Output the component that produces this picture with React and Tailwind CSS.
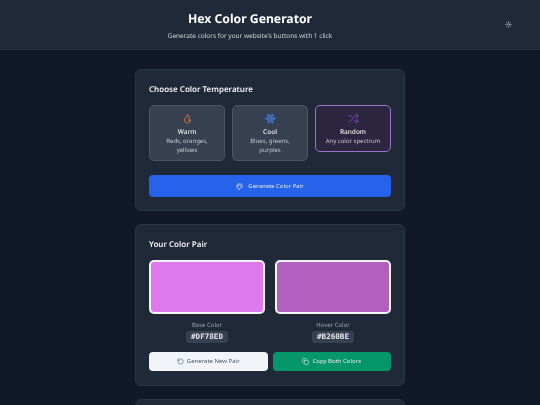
import { Snowflake, Shuffle, Palette, RotateCcw, Copy, Sun } from 'lucide-react'
import { RiFireLine } from 'react-icons/ri'

const FONT = "font-['Noto_Sans',sans-serif] [text-rendering:geometricPrecision]"

function TempOption({ icon, title, desc, active }) {
  const box = active
    ? 'bg-[#2d2640] border-[1.5px] border-[#9a74cf] h-[47px]'
    : 'bg-[#374151] border border-[#4b5563] h-[56px]'
  return (
    <div className={`w-[76px] rounded-[5px] flex flex-col items-center pt-[7px] ${box}`}>
      {icon}
      <div className="text-[6.5px] leading-[9px] font-medium text-[#f3f4f6] mt-[3px]">{title}</div>
      <div className="text-[6px] leading-[8.5px] text-[#c4cad3] text-center px-[6px] mt-[1px]">{desc}</div>
    </div>
  )
}

function Swatch({ color, label, hex }) {
  return (
    <div className="w-[116px] flex flex-col items-center">
      <div className="w-full h-[54px] rounded-[5px] border-2 border-[#f3f4f6]" style={{ backgroundColor: color }} />
      <div className="text-[6px] leading-[8px] text-[#9ca3af] mt-[7px]">{label}</div>
      <div className="mt-[2px] h-[12px] px-[5px] rounded-[3px] bg-[#374151] flex items-center font-['DejaVu_Sans_Mono',monospace] font-bold text-[7.6px] text-[#e5e7eb]">{hex}</div>
    </div>
  )
}

export default function App() {
  return (
    <div className="w-[540px] h-[405px] overflow-hidden bg-[#111827]">
      <div className={`${FONT} [will-change:transform] text-white`}>
        <header className="h-[50px] bg-[#1f2937] border-b border-[#263241] flex items-center">
          <div className="w-[500px] flex flex-col items-center">
            <h1 className="text-[12.2px] leading-[17px] font-bold text-white">Hex Color Generator</h1>
            <p className="text-[6.5px] leading-[9px] text-[#d1d5db] mt-[4px]">Generate colors for your website's buttons with 1 click</p>
          </div>
          <Sun className="ml-[4.5px] w-[7px] h-[7px] text-[#d1d5db]" strokeWidth={2} />
        </header>

        <main className="w-[270px] mx-auto pt-[19px] flex flex-col gap-[13px]">
          <section className="h-[142px] bg-[#1f2937] border border-[#2b3646] rounded-[6px] px-[13px] pt-[14px]">
            <h2 className="text-[8px] leading-[11px] font-semibold text-[#f3f4f6]">Choose Color Temperature</h2>
            <div className="flex items-start gap-[7px] mt-[10px]">
              <TempOption icon={<RiFireLine className="w-[11px] h-[11px] text-[#c96f35]" />} title="Warm" desc="Reds, oranges, yellows" />
              <TempOption icon={<Snowflake className="w-[11px] h-[11px] text-[#3b78d8]" strokeWidth={2.75} />} title="Cool" desc="Blues, greens, purples" />
              <TempOption icon={<Shuffle className="w-[11px] h-[11px] text-[#7f48c4]" strokeWidth={2} />} title="Random" desc="Any color spectrum" active />
            </div>
            <button className="w-full h-[22px] mt-[14px] rounded-[4px] bg-[#2563eb] flex items-center justify-center gap-[5px] text-[6px] text-[#e5e7eb]">
              <Palette className="w-[7px] h-[7px]" strokeWidth={2} />
              Generate Color Pair
            </button>
          </section>

          <section className="h-[162px] bg-[#1f2937] border border-[#2b3646] rounded-[6px] px-[13px] pt-[14px]">
            <h2 className="text-[8px] leading-[11px] font-semibold text-[#f3f4f6]">Your Color Pair</h2>
            <div className="flex justify-between mt-[10px]">
              <Swatch color="#DF78ED" label="Base Color" hex="#DF78ED" />
              <Swatch color="#B260BE" label="Hover Color" hex="#B260BE" />
            </div>
            <div className="flex gap-[5px] mt-[9px]">
              <button className="flex-1 h-[19px] rounded-[4px] bg-[#f1f5f9] flex items-center justify-center gap-[3px] text-[6px] text-[#4b5563]">
                <RotateCcw className="w-[7px] h-[7px]" strokeWidth={2} />
                Generate New Pair
              </button>
              <button className="flex-1 h-[19px] rounded-[4px] bg-[#059669] flex items-center justify-center gap-[3px] text-[6px] text-[#e5e7eb]">
                <Copy className="w-[7px] h-[7px]" strokeWidth={2} />
                Copy Both Colors
              </button>
            </div>
          </section>

          <section className="h-[60px] bg-[#1f2937] border border-[#2b3646] rounded-[6px]" />
        </main>
      </div>
    </div>
  )
}
